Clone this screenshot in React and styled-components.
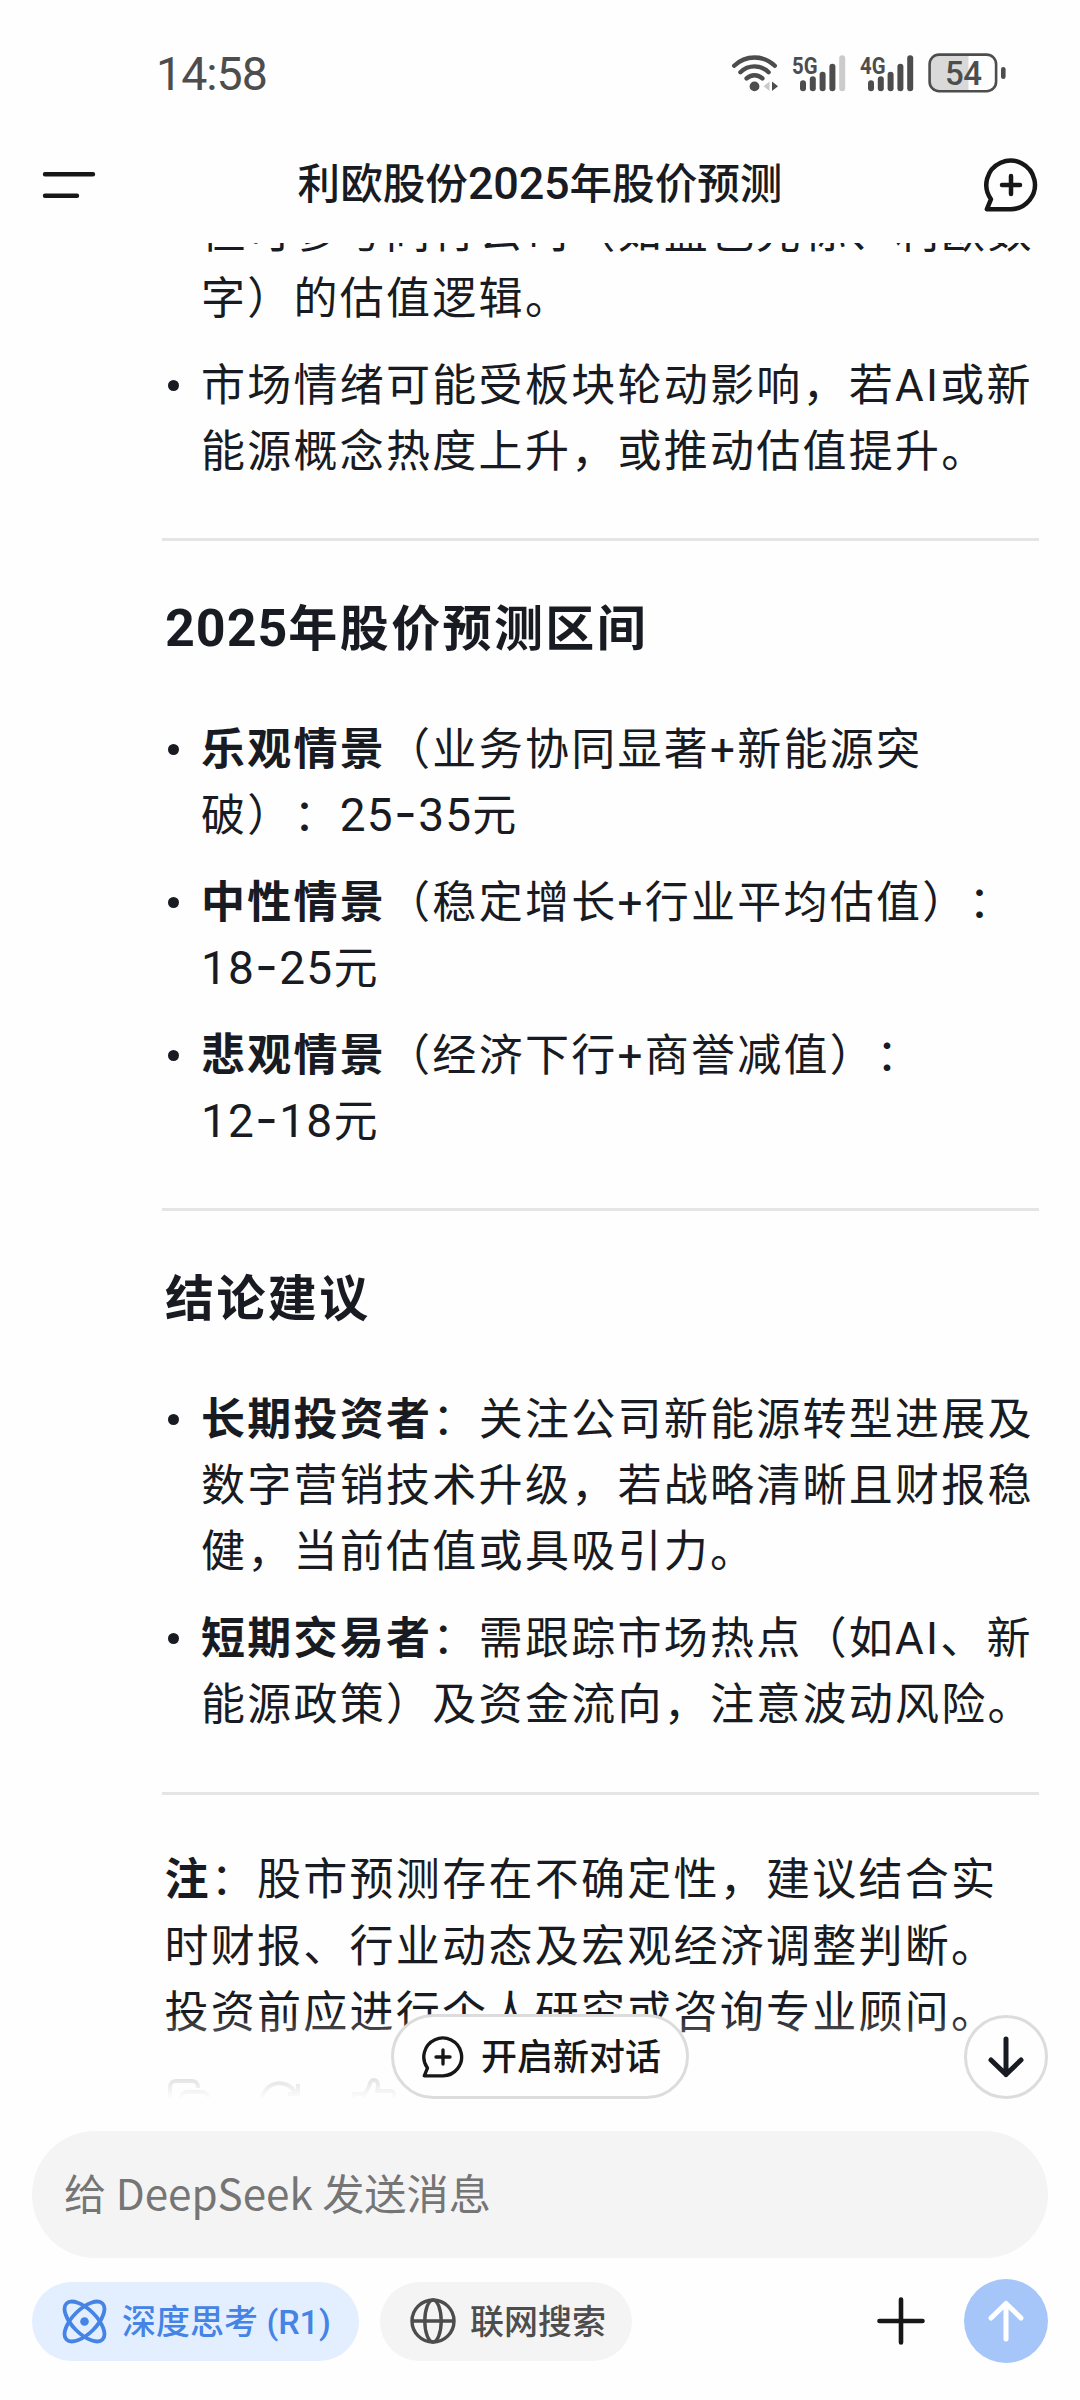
/**
 *
 * Chat screen
 *
 */

import React from 'react';
import styled, { createGlobalStyle } from 'styled-components';

const GlobalStyle = createGlobalStyle`
  * {
    box-sizing: border-box;
  }
  body {
    margin: 0;
    background: #fefefe;
    font-family: Roboto, 'Noto Sans CJK SC', sans-serif;
    color: #191b22;
    text-spacing-trim: space-all;
  }
  svg {
    display: block;
    flex: none;
  }
`;

const Screen = styled.div`
  display: flex;
  flex-direction: column;
  width: 1080px;
  height: 2400px;
  overflow: hidden;
`;

const StatusBar = styled.div`
  display: flex;
  justify-content: space-between;
  align-items: center;
  height: 146px;
  padding: 0 74px 0 156px;
  color: #4d4d4d;
`;

const Clock = styled.div`
  padding-top: 2px;
  font-size: 46.5px;
  letter-spacing: -1px;
`;

const StatusIcons = styled.div`
  display: flex;
  align-items: center;
`;

const TopBar = styled.div`
  display: flex;
  justify-content: space-between;
  align-items: center;
  height: 97px;
  padding: 0 42px 20px;
`;

const Title = styled.div`
  padding-bottom: 8px;
  font-size: 42.6px;
  font-weight: 500;
  .num {
    font-size: 45px;
    line-height: 0;
    letter-spacing: -0.2px;
  }
`;

const Chat = styled.div`
  position: relative;
  height: 1856px;
  overflow: hidden;
`;

const Message = styled.div`
  margin-top: -43.5px;
  padding: 0 41px 0 162px;
  font-size: 44px;
  line-height: 66.2px;
  letter-spacing: 2.27px;
  white-space: nowrap;
`;

const Heading = styled.h3`
  margin: 51.5px 0 50px 3px;
  font-size: 49px;
  line-height: 74px;
  font-weight: 700;
  letter-spacing: 2.4px;
  .num {
    font-size: 52px;
    line-height: 0;
    letter-spacing: 1px;
  }
`;

const List = styled.ul`
  display: flex;
  flex-direction: column;
  gap: 20.6px;
  margin: 0;
  padding: 0;
  list-style: none;
`;

const Item = styled.li`
  display: flex;
  &::before {
    content: '';
    width: 11px;
    height: 11px;
    margin: 27px 22px 0 6px;
    border-radius: 50%;
    background: #191b22;
  }
`;

const Num = styled.span`
  font-size: 46px;
  line-height: 0;
  letter-spacing: 1.2px;
  i {
    font-family: Inter, sans-serif;
    font-size: 50px;
    font-style: normal;
  }
`;

const Divider = styled.div`
  height: 3px;
  margin-top: 53.3px;
  background: #e5e5e5;
`;

const Note = styled.p`
  margin: 52.5px 0 0 2.5px;
`;

const Actions = styled.div`
  display: flex;
  gap: 50px;
  margin: 32px 0 0 6px;
  color: #8c8c8c;
`;

const Fade = styled.div`
  position: absolute;
  left: 0;
  right: 0;
  bottom: 0;
  height: 86px;
  background: linear-gradient(rgba(254, 254, 254, 0), #fefefe);
`;

const NewChat = styled.button`
  position: absolute;
  left: 391px;
  bottom: 0;
  display: flex;
  align-items: center;
  gap: 17px;
  width: 298px;
  height: 85px;
  padding: 0 0 0 28px;
  border: 3px solid #dcdcdc;
  border-radius: 43px;
  background: #fefefe;
  color: #171717;
  font: 500 36px Roboto, 'Noto Sans CJK SC', sans-serif;
  span {
    padding-bottom: 5px;
  }
`;

const RoundButton = styled.button`
  display: flex;
  justify-content: center;
  align-items: center;
  width: 84px;
  height: 84px;
  padding: 0;
  border: ${(props) => (props.$filled ? 'none' : '3px solid #dcdcdc')};
  border-radius: 50%;
  background: ${(props) => (props.$filled ? '#a6c6fa' : '#fefefe')};
  color: ${(props) => (props.$filled ? '#fff' : '#191b22')};
`;

const ScrollDown = styled(RoundButton)`
  position: absolute;
  right: 32px;
  bottom: 0;
`;

const Composer = styled.div`
  padding: 32px 32px 0;
`;

const Input = styled.div`
  display: flex;
  align-items: center;
  height: 127px;
  padding: 0 32px 7px;
  border-radius: 64px;
  background: #f4f4f4;
  color: #757575;
  font-family: 'Noto Sans CJK SC', sans-serif;
  font-size: 42.2px;
`;

const Tools = styled.div`
  display: flex;
  align-items: center;
  height: 84px;
  margin-top: 21px;
`;

const Chip = styled.div`
  display: flex;
  align-items: center;
  gap: ${(props) => (props.$active ? '15px' : '14px')};
  width: ${(props) => (props.$active ? '327px' : '252px')};
  height: 79px;
  margin-right: 21px;
  padding-left: 30px;
  border-radius: 40px;
  background: ${(props) => (props.$active ? '#e3efff' : '#f4f4f4')};
  color: ${(props) => (props.$active ? '#4583e4' : '#4d4d4d')};
  font-size: 34px;
  font-weight: 500;
  white-space: nowrap;
  span {
    padding-bottom: 4px;
  }
`;

const Attach = styled.div`
  margin: 0 39px 0 auto;
  color: #171717;
`;

const WifiIcon = () => (
  <svg width="61" height="40" viewBox="0 0 61 40" fill="none" stroke="#4d4d4d" strokeWidth="4.4" strokeLinecap="round">
    <path d="M3.2 12.8a29 29 0 0 1 40.6 0" />
    <path d="M9.4 19.2a20 20 0 0 1 28.2 0" />
    <path d="M15.6 25.4a11.3 11.3 0 0 1 15.8 0" />
    <circle cx="23.5" cy="33.4" r="4.9" fill="#4d4d4d" stroke="none" />
    <path d="M38.5 28.5v9.5l-6-4.8z" fill="#c9c9c9" stroke="none" />
    <path d="M41 28.5v9.5l6-4.8z" fill="#4d4d4d" stroke="none" />
  </svg>
);

const BARS = [11, 15, 19.5, 27.5, 36];

const Signal = ({ label, level }) => (
  <svg width="68" height="40" viewBox="0 0 68 40">
    <text x="0" y="20.5" fontFamily="Roboto, sans-serif" fontSize="24" fontWeight="700" fill="#4d4d4d" textLength="25.5" lengthAdjust="spacingAndGlyphs">
      {label}
    </text>
    {BARS.map((h, i) => (
      <rect key={h} x={8 + i * 9.8} y={38.3 - h} width="6" height={h} rx="3" fill={i < level ? '#4d4d4d' : '#cbcbcb'} />
    ))}
  </svg>
);

const BatteryIcon = () => (
  <svg width="78" height="40" viewBox="0 0 78 40">
    <path d="M40.5 1.8h-29A9.5 9.5 0 0 0 2 11.3V29a9.5 9.5 0 0 0 9.5 9.2h29z" fill="#d9d9d9" />
    <rect x="1.6" y="1.6" width="66.5" height="36.6" rx="9.5" fill="none" stroke="#4d4d4d" strokeWidth="2.6" />
    <rect x="73" y="14" width="4.6" height="12" rx="2.3" fill="#4d4d4d" />
    <text x="35.5" y="32" textAnchor="middle" fontFamily="Roboto, sans-serif" fontSize="33" fontWeight="500" fill="#4d4d4d" textLength="37">
      54
    </text>
  </svg>
);

const MenuIcon = () => (
  <svg width="54" height="28" viewBox="0 0 54 28" stroke="#171717" strokeWidth="4.4" strokeLinecap="round">
    <path d="M3 3.3h48M3 24.7h32" />
  </svg>
);

const BubbleIcon = ({ size = 54, stroke = 4.5 }) => (
  <svg width={size} height={size} viewBox="0 0 54 54" fill="none" stroke="#171717" strokeWidth={stroke} strokeLinecap="round" strokeLinejoin="round">
    <path d="M27 51.2A24.3 24.3 0 1 0 7 41.2L2.9 51.2z" />
    <path d="M27 18v18M18 27h18" />
  </svg>
);

const ArrowIcon = ({ up }) => (
  <svg width="36" height="42" viewBox="0 0 36 42" fill="none" stroke="currentColor" strokeWidth="5" strokeLinecap="round" strokeLinejoin="round">
    {up ? <path d="M18 39V3.5M3 18L18 3.5L33 18" /> : <path d="M18 3V38.5M3 24L18 38.5L33 24" />}
  </svg>
);

const AtomIcon = () => (
  <svg width="45" height="45" viewBox="0 0 45 45" fill="none" stroke="currentColor" strokeWidth="3.8">
    <ellipse cx="22.5" cy="22.5" rx="25.5" ry="12" transform="rotate(45 22.5 22.5)" />
    <ellipse cx="22.5" cy="22.5" rx="25.5" ry="12" transform="rotate(-45 22.5 22.5)" />
    <circle cx="22.5" cy="22.5" r="4.3" fill="currentColor" stroke="none" />
  </svg>
);

const GlobeIcon = () => (
  <svg width="46" height="46" viewBox="0 0 46 46" fill="none" stroke="currentColor" strokeWidth="3.4">
    <circle cx="23" cy="23" r="21" />
    <ellipse cx="23" cy="23" rx="8.2" ry="21" />
    <path d="M2 23h42" />
  </svg>
);

const Range = ({ from, to }) => (
  <>
    <Num>
      {from}
      <i>-</i>
      {to}
    </Num>
    元
  </>
);

function App() {
  return (
    <Screen>
      <GlobalStyle />
      <StatusBar>
        <Clock>14:58</Clock>
        <StatusIcons>
          <WifiIcon />
          <Signal label="5G" level={4} />
          <Signal label="4G" level={5} />
          <BatteryIcon />
        </StatusIcons>
      </StatusBar>
      <TopBar>
        <MenuIcon />
        <Title>
          利欧股份<span className="num">2025</span>年股价预测
        </Title>
        <BubbleIcon />
      </TopBar>
      <Chat>
        <Message>
          <List>
            <Item>
              <div>
                但可参考同行公司（如蓝色光标、利欧数
                <br />
                字）的估值逻辑。
              </div>
            </Item>
            <Item>
              <div>
                市场情绪可能受板块轮动影响，若AI或新
                <br />
                能源概念热度上升，或推动估值提升。
              </div>
            </Item>
          </List>
          <Divider />
          <Heading>
            <span className="num">2025</span>年股价预测区间
          </Heading>
          <List>
            <Item>
              <div>
                <b>乐观情景</b>（业务协同显著+新能源突
                <br />
                破）：
                <Range from="25" to="35" />
              </div>
            </Item>
            <Item>
              <div>
                <b>中性情景</b>（稳定增长+行业平均估值）：
                <br />
                <Range from="18" to="25" />
              </div>
            </Item>
            <Item>
              <div>
                <b>悲观情景</b>（经济下行+商誉减值）：
                <br />
                <Range from="12" to="18" />
              </div>
            </Item>
          </List>
          <Divider />
          <Heading>结论建议</Heading>
          <List>
            <Item>
              <div>
                <b>长期投资者</b>：关注公司新能源转型进展及
                <br />
                数字营销技术升级，若战略清晰且财报稳
                <br />
                健，当前估值或具吸引力。
              </div>
            </Item>
            <Item>
              <div>
                <b>短期交易者</b>：需跟踪市场热点（如AI、新
                <br />
                能源政策）及资金流向，注意波动风险。
              </div>
            </Item>
          </List>
          <Divider />
          <Note>
            <b>注</b>：股市预测存在不确定性，建议结合实
            <br />
            时财报、行业动态及宏观经济调整判断。
            <br />
            投资前应进行个人研究或咨询专业顾问。
          </Note>
          <Actions>
            <svg width="42" height="42" viewBox="0 0 42 42" fill="none" stroke="currentColor" strokeWidth="4">
              <path d="M9 30H8a6 6 0 0 1-6-6V9a6 6 0 0 1 6-6h16a6 6 0 0 1 6 6v1" />
              <rect x="13" y="14" width="27" height="26" rx="6" />
            </svg>
            <svg width="42" height="42" viewBox="0 0 42 42" fill="none" stroke="currentColor" strokeWidth="4">
              <path d="M37 28A18 18 0 1 1 35 14M38 6v10H28" />
            </svg>
            <svg width="44" height="42" viewBox="0 0 44 42" fill="none" stroke="currentColor" strokeWidth="4" strokeLinejoin="round">
              <path d="M2 16h10v24H2zM12 16C18 12 17 2 21 2c5 0 6 4 4 11h13c4 0 5 3 4 7l-4 16c-1 3-3 4-6 4H12" />
            </svg>
          </Actions>
        </Message>
        <Fade />
        <NewChat>
          <BubbleIcon size={42} stroke={4.3} />
          <span>开启新对话</span>
        </NewChat>
        <ScrollDown>
          <ArrowIcon />
        </ScrollDown>
      </Chat>
      <Composer>
        <Input>给 DeepSeek 发送消息</Input>
        <Tools>
          <Chip $active>
            <AtomIcon />
            <span>深度思考 (R1)</span>
          </Chip>
          <Chip>
            <GlobeIcon />
            <span>联网搜索</span>
          </Chip>
          <Attach>
            <svg width="48" height="48" viewBox="0 0 48 48" stroke="currentColor" strokeWidth="4.6" strokeLinecap="round">
              <path d="M24 2.5v43M2.5 24h43" />
            </svg>
          </Attach>
          <RoundButton $filled>
            <ArrowIcon up />
          </RoundButton>
        </Tools>
      </Composer>
    </Screen>
  );
}

export default App;
